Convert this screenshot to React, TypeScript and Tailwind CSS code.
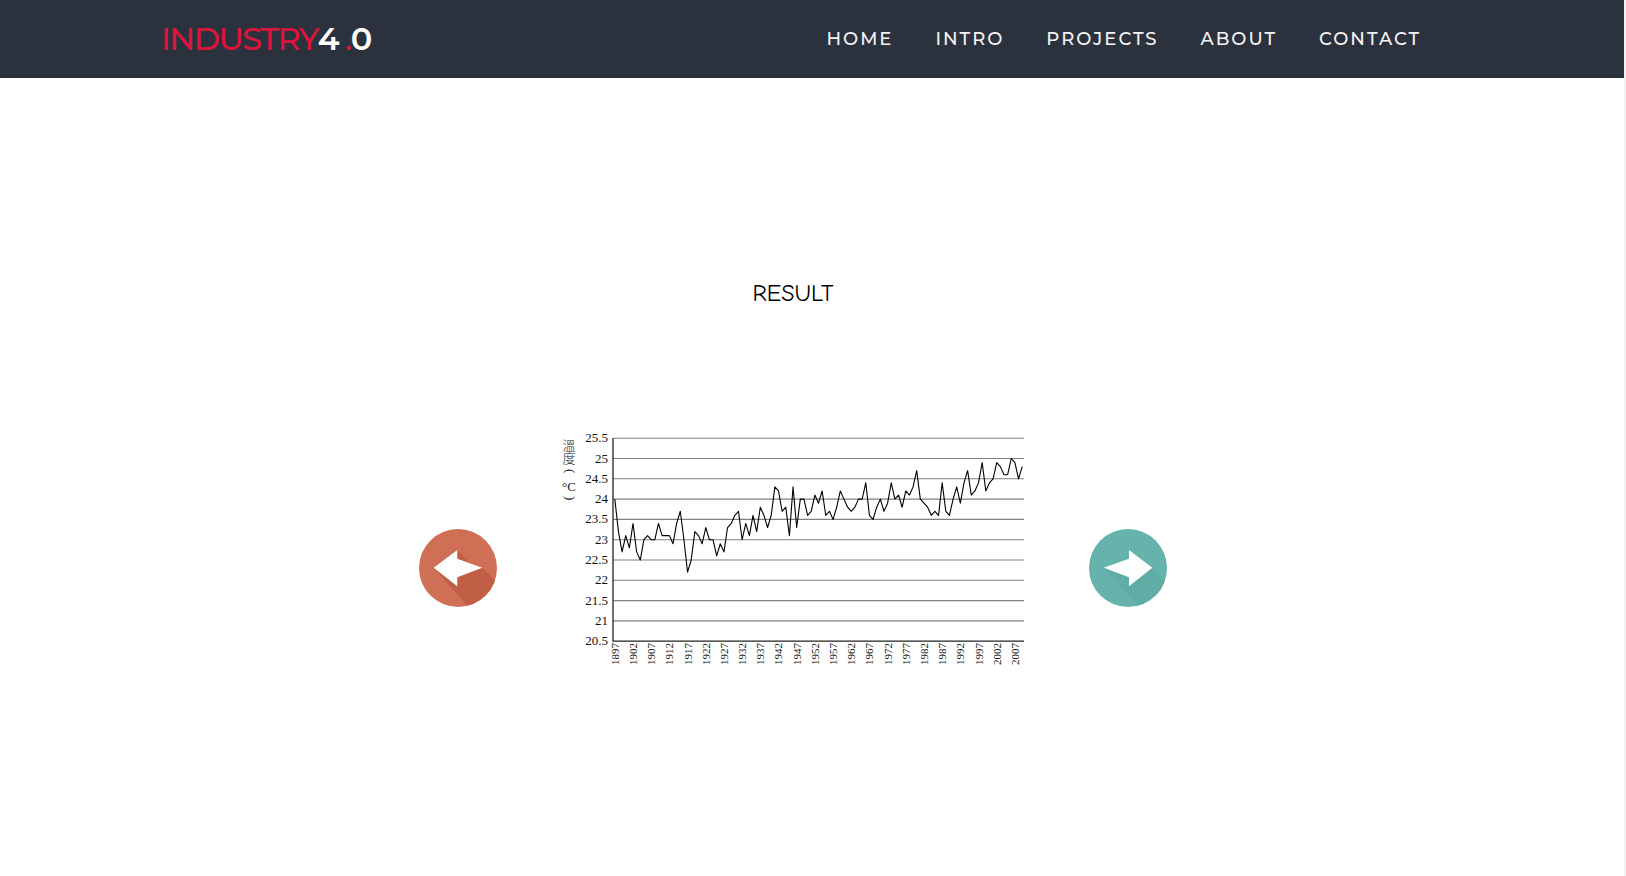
const links = ["HOME", "INTRO", "PROJECTS", "ABOUT", "CONTACT"];

const FIRST_YEAR = 1897;
const temperatures = [
  24, 23.2, 22.7, 23.1, 22.8, 23.4, 22.7, 22.5, 23, 23.1, 23, 23, 23.4, 23.1, 23.1, 23.1, 22.9, 23.4, 23.7, 23,
  22.2, 22.5, 23.2, 23.1, 22.9, 23.3, 23, 23, 22.6, 22.9, 22.7, 23.3, 23.4, 23.6, 23.7, 23, 23.4, 23.1, 23.6, 23.2,
  23.8, 23.6, 23.3, 23.6, 24.3, 24.2, 23.7, 23.8, 23.1, 24.3, 23.3, 24, 24, 23.6, 23.7, 24.1, 23.9, 24.2, 23.6, 23.7,
  23.5, 23.8, 24.2, 24, 23.8, 23.7, 23.8, 24, 24, 24.4, 23.6, 23.5, 23.8, 24, 23.7, 23.9, 24.4, 24, 24.1, 23.8,
  24.2, 24.1, 24.3, 24.7, 24, 23.9, 23.8, 23.6, 23.7, 23.6, 24.4, 23.7, 23.6, 24, 24.3, 23.9, 24.4, 24.7, 24.1, 24.2,
  24.4, 24.9, 24.2, 24.4, 24.5, 24.9, 24.8, 24.6, 24.6, 25, 24.9, 24.5, 24.8,
];

const left = 52;
const right = 463;
const step = (right - left) / temperatures.length;
const xOf = (index: number) => left + step * (index + 0.5);
const yOf = (value: number) => 8.2 + (25.5 - value) * 40.6;
const ticks = Array.from({ length: 11 }, (_, i) => 25.5 - i * 0.5);
const years = Array.from({ length: 23 }, (_, i) => FIRST_YEAR + i * 5);

function TemperatureChart() {
  return (
    <svg width="464" height="240" viewBox="0 0 464 240" role="img" aria-label="Temperature by year">
      <g fill="#222" fontSize="13">
        <text
          x="8"
          y="9"
          fontFamily="'Noto Sans CJK TC', sans-serif"
          fontWeight="300"
          style={{ writingMode: "vertical-rl" }}
        >
          溫度
        </text>
        <g fontFamily="'Liberation Serif', serif">
          <text transform="translate(5 39) rotate(90)">(</text>
          <text x="8" y="61" textAnchor="middle">
            °C
          </text>
          <text transform="translate(5 66) rotate(90)">)</text>
        </g>
      </g>
      <g stroke="#808080" strokeWidth="1.1">
        {ticks.slice(0, -1).map((t) => (
          <line key={t} x1={left} x2={right} y1={yOf(t)} y2={yOf(t)} />
        ))}
      </g>
      <path d={`M${left} ${yOf(25.5)}V${yOf(20.5)}H${right}`} fill="none" stroke="#222" strokeWidth="1.3" />
      <g fontFamily="'Liberation Serif', serif" fontSize="13" textAnchor="end" fill="#111">
        {ticks.map((t) => (
          <text key={t} x="47" y={yOf(t) + 4}>
            {t}
          </text>
        ))}
      </g>
      <g fontFamily="'Liberation Serif', serif" fontSize="11" textAnchor="end" fill="#111">
        {years.map((year, i) => (
          <text key={year} transform={`translate(${xOf(i * 5) + 4} 213) rotate(-90)`}>
            {year}
          </text>
        ))}
      </g>
      <polyline
        points={temperatures.map((t, i) => `${xOf(i)},${yOf(t)}`).join(" ")}
        fill="none"
        stroke="#000"
        strokeWidth="1.1"
        strokeLinejoin="round"
      />
    </svg>
  );
}

function PreviousIcon() {
  return (
    <svg width="78" height="78" viewBox="0 0 78 78" aria-hidden="true">
      <clipPath id="previous-disc">
        <circle cx="39" cy="39" r="39" />
      </clipPath>
      <circle cx="39" cy="39" r="39" fill="#cf7056" />
      <path d="M38.3 21L49 33L63.3 38.7L90 64L60 90L14.7 38.7Z" fill="#c05f46" clipPath="url(#previous-disc)" />
      <path d="M14.7 38.7L38.3 21V29.7L63.3 38.7L38.3 48.3V57.3Z" fill="#fff" />
    </svg>
  );
}

function NextIcon() {
  return (
    <svg width="78" height="78" viewBox="0 0 78 78" aria-hidden="true">
      <clipPath id="next-disc">
        <circle cx="39" cy="39" r="39" />
      </clipPath>
      <circle cx="39" cy="39" r="39" fill="#66b3ad" />
      <path d="M63.3 38.7L90 64L60 90L14.7 38.7Z" fill="#60aca6" clipPath="url(#next-disc)" />
      <path d="M14.7 38.7L40 29.7V21L63.3 38.7L40 57.3V48.3Z" fill="#fff" />
    </svg>
  );
}

export default function App() {
  return (
    <div className="flex min-h-screen bg-white">
      <div className="flex-1">
        <header className="flex h-[78px] items-center justify-between border-b border-[#252c38] bg-[#2b323e] pr-[203px] pl-[161px] font-[Montserrat,Inter,sans-serif]">
          <a href="#home" className="text-[32px] leading-9 font-medium tracking-tighter whitespace-pre text-[#dc143c]">
            INDUSTRY<span className="font-semibold text-white">4</span> .<span className="font-semibold text-white">0</span>
          </a>
          <nav className="flex gap-[42px] text-lg font-medium tracking-[2px] text-[#f5f5f5]">
            {links.map((label) => (
              <a key={label} href={`#${label.toLowerCase()}`}>
                {label}
              </a>
            ))}
          </nav>
        </header>
        <main className="flex flex-col items-center pt-[199px] pr-[38px]">
          <h1 className="font-['Comic_Sans_MS','Comic_Neue',Lato,sans-serif] text-2xl text-black">RESULT</h1>
          <div className="mt-[121px] flex items-center gap-16">
            <button type="button" aria-label="Previous" className="cursor-pointer">
              <PreviousIcon />
            </button>
            <div className="pb-9">
              <TemperatureChart />
            </div>
            <button type="button" aria-label="Next" className="cursor-pointer">
              <NextIcon />
            </button>
          </div>
        </main>
      </div>
      <div className="w-[2px] bg-[#f1f1f1]" />
    </div>
  );
}
